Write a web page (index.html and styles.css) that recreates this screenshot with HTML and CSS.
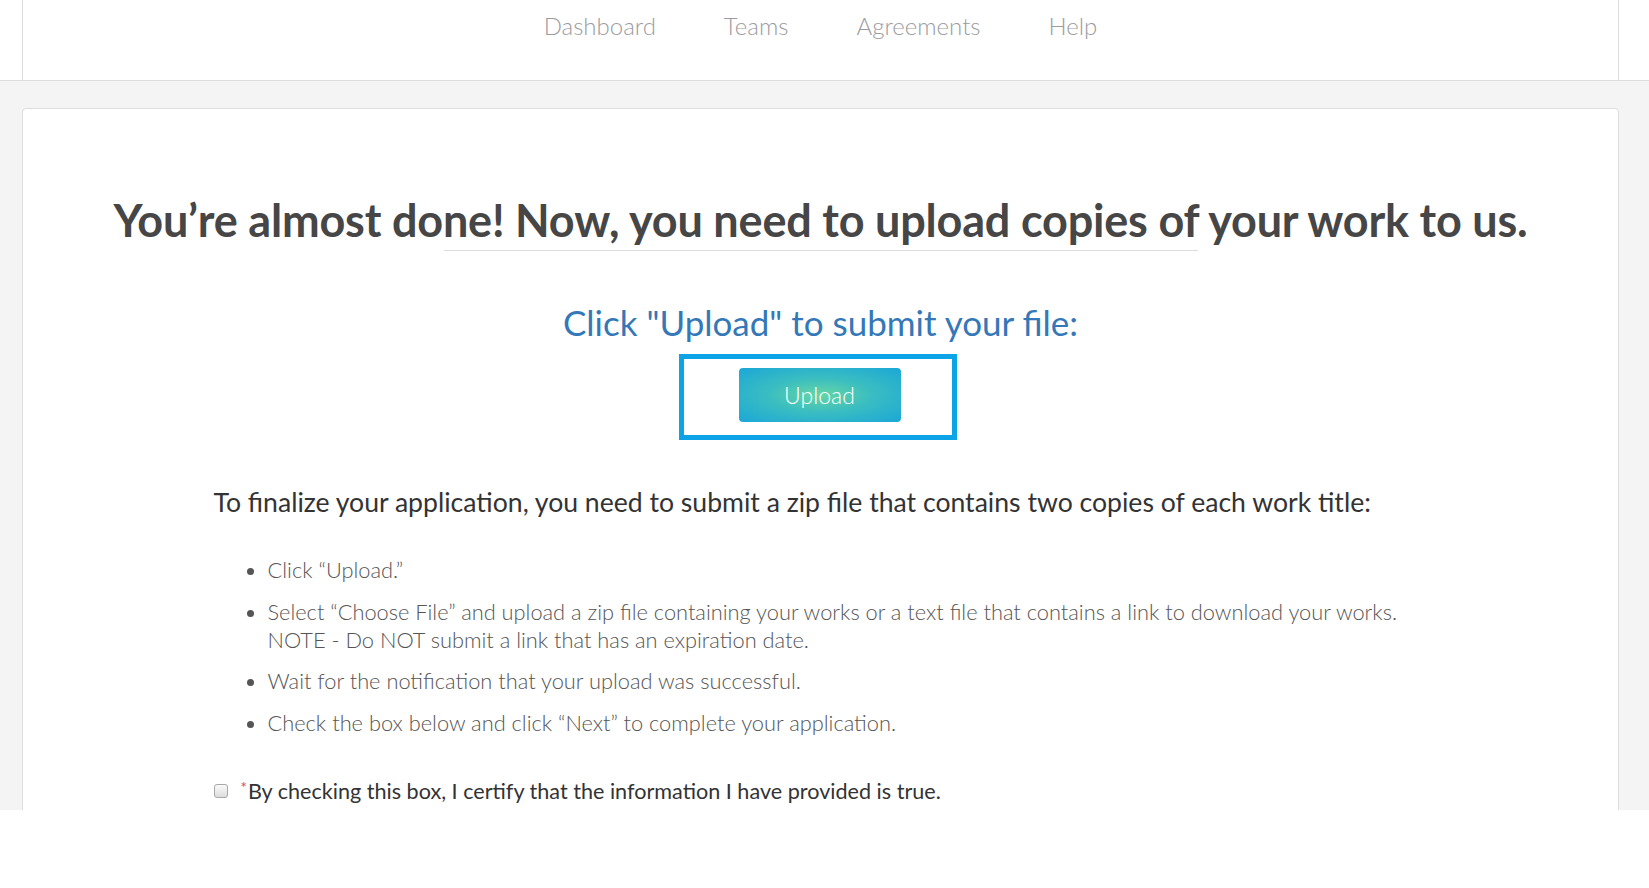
FILE: index.html
```html
<!DOCTYPE html>
<html lang="en">
<head>
<meta charset="utf-8">
<title>Upload your work</title>
<link rel="stylesheet" href="styles.css">
</head>
<body>
<header class="topbar">
  <div class="topbar-inner">
    <nav class="nav">
      <a class="nav-link" href="#">Dashboard</a>
      <a class="nav-link" href="#">Teams</a>
      <a class="nav-link" href="#">Agreements</a>
      <a class="nav-link" href="#">Help</a>
    </nav>
  </div>
</header>
<main class="page">
  <section class="card">
    <h1 class="title">You’re almost done! Now, you need to upload copies of your work to us.</h1>
    <hr class="title-rule">
    <h2 class="subtitle">Click "Upload" to submit your file:</h2>
    <div class="upload-frame">
      <button class="upload-btn" type="button">Upload</button>
    </div>
    <div class="content">
      <p class="lead">To finalize your application, you need to submit a zip file that contains two copies of each work title:</p>
      <ul class="steps">
        <li>Click “Upload.”</li>
        <li>Select “Choose File” and upload a zip file containing your works or a text file that contains a link to download your works.<br>NOTE - Do NOT submit a link that has an expiration date.</li>
        <li>Wait for the notification that your upload was successful.</li>
        <li>Check the box below and click “Next” to complete your application.</li>
      </ul>
      <label class="certify">
        <input class="check" type="checkbox">
        <span class="req">*</span>By checking this box, I certify that the information I have provided is true.
      </label>
    </div>
  </section>
</main>
</body>
</html>
```

FILE: styles.css
```css
html, body {
  margin: 0;
  padding: 0;
  background: #ffffff;
}

body {
  font-family: "Lato", "Open Sans", sans-serif;
  color: #333333;
}

.topbar {
  background: #ffffff;
  border-bottom: 1px solid #dddddd;
}

.topbar-inner {
  margin-left: 22px;
  width: 1595px;
  height: 80px;
  border-left: 1px solid #dddddd;
  border-right: 1px solid #dddddd;
}

.nav {
  display: flex;
  justify-content: center;
  gap: 68px;
  padding-top: 11px;
}

.nav-link {
  font-size: 24px;
  font-weight: 300;
  color: #9b9b9f;
  text-decoration: none;
  line-height: 30px;
}

.page {
  background: #f4f4f4;
  height: 729px;
  overflow: hidden;
  padding: 27px 30px 0 22px;
  box-sizing: border-box;
}

.card {
  background: #ffffff;
  border: 1px solid #dddddd;
  border-radius: 4px;
  min-height: 900px;
  padding-top: 85px;
  text-align: center;
}

.title {
  margin: 0;
  font-size: 45px;
  font-weight: 700;
  line-height: 52px;
  color: #464646;
  letter-spacing: -0.2px;
}

.title-rule {
  width: 754px;
  margin: 4px auto 0;
  border: 0;
  border-top: 1px solid #dddddd;
  height: 0;
}

.subtitle {
  margin: 50px 0 0;
  font-size: 35px;
  font-weight: 400;
  line-height: 42px;
  color: #3478b8;
}

.upload-frame {
  display: inline-block;
  margin-top: 11px;
  margin-right: 6px;
  border: 5px solid #0ca4e6;
  padding: 9px 51px 13px 55px;
}

.upload-btn {
  display: block;
  width: 162px;
  height: 54px;
  border: 0;
  border-radius: 4px;
  background: radial-gradient(ellipse at center, #66d6a4 0%, #3abdc1 45%, #1ba7d8 100%);
  color: #ffffff;
  font-family: "Lato", sans-serif;
  font-size: 23px;
  font-weight: 300;
  padding: 0;
}

.content {
  width: 1214px;
  margin: 46px auto 0;
  text-align: left;
}

.lead {
  margin: 0;
  font-size: 26.6px;
  font-weight: 400;
  line-height: 32px;
  color: #333333;
}

.steps {
  margin: 38px 0 0;
  padding-left: 54px;
  font-size: 21.8px;
  font-weight: 300;
  line-height: 28px;
  color: #555555;
}

.steps li {
  margin-bottom: 13.6px;
}

.steps li:last-child {
  margin-bottom: 0;
}

.certify {
  display: flex;
  align-items: center;
  margin-top: 40px;
  font-size: 21.6px;
  line-height: 28px;
  color: #333333;
}

.check {
  appearance: none;
  -webkit-appearance: none;
  width: 14px;
  height: 14px;
  margin: 0 13px 0 0;
  border: 1px solid #a8a8a8;
  border-radius: 3px;
  background: linear-gradient(#fafafa, #dcdcdc);
  box-sizing: border-box;
}

.req {
  color: #e0443a;
  font-size: 15px;
  align-self: flex-start;
  line-height: 20px;
  margin-right: 1px;
}
```
